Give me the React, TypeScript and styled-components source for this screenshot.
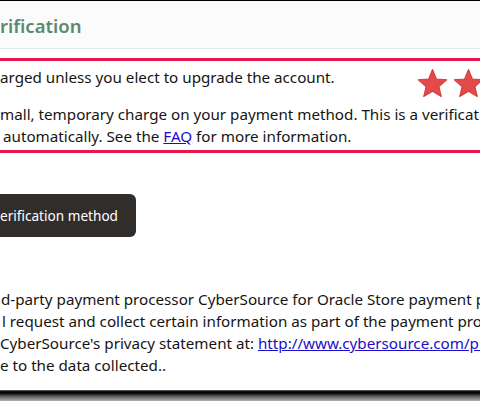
import React from "react";
import styled, { createGlobalStyle } from "styled-components";

const Global = createGlobalStyle`
  html, body { margin: 0; padding: 0; background: #ffffff; }
  body { width: 480px; height: 401px; overflow: hidden; font-family: "Noto Sans", "Open Sans", sans-serif; color: #161513; }
`;

const Frame = styled.div`
  width: 480px;
  height: 401px;
  overflow: hidden;
  display: flex;
  flex-direction: column;
  border-top: 1px solid #000;
  box-sizing: border-box;
`;

const Header = styled.div`
  height: 47px;
  background: #fbfbfb;
  border-bottom: 1px solid #e6e6e6;
  display: flex;
  align-items: center;
  flex-shrink: 0;
`;

const Title = styled.h2`
  margin: 0;
  font-size: 18.5px;
  font-weight: 600;
  color: #5a8a6e;
  white-space: nowrap;
  margin-top: 1px;
`;

const Card = styled.div`
  flex: 1;
  display: flex;
  flex-direction: column;
  background: #fff;
`;

const Notice = styled.div`
  margin-top: 9px;
  border-top: 3px solid #e8164a;
  border-bottom: 3px solid #e8164a;
  padding: 5px 0 3px 0;
  font-size: 15.2px;
  line-height: 22px;
`;

const NoticeRow = styled.div`
  display: flex;
  justify-content: space-between;
  align-items: flex-start;
`;

const Line = styled.div<{ $indent?: number }>`
  white-space: nowrap;
  padding-left: ${(p) => p.$indent ?? 0}px;
`;

const Stars = styled.div`
  display: flex;
  gap: 5px;
  margin-top: 2px;
  margin-right: -4px;
  flex-shrink: 0;
`;

const Para = styled.div`
  margin-top: 5px;
`;

const Link = styled.a`
  color: #1a0dcc;
  text-decoration: underline;
`;

const Button = styled.button`
  align-self: flex-start;
  margin: 41px 0 0 -16px;
  height: 43px;
  padding: 0 18px 0 16px;
  border: none;
  border-radius: 6px;
  background: #312d2a;
  color: #fff;
  font-family: "Noto Sans", "Open Sans", sans-serif;
  font-size: 13.6px;
  white-space: nowrap;
`;

const Body = styled.div`
  margin-top: 51px;
  font-size: 15.2px;
  line-height: 22px;
`;

const Spacer = styled.div`
  flex: 1;
`;

const Shadow = styled.div`
  height: 11px;
  flex-shrink: 0;
  background: linear-gradient(to bottom, #8a8a8a 0px, #111 1px, #000 3px, #555 6px, #b0b0b0 11px);
`;

const Star = () => (
  <svg width="31" height="30" viewBox="0 0 24 23">
    <polygon
      points="12,1 15,8.4 23,9 17,14.3 18.8,22 12,17.9 5.2,22 7,14.3 1,9 9,8.4"
      fill="#e44a4a"
      stroke="#d43c3c"
      strokeWidth="0.8"
      strokeLinejoin="round"
    />
  </svg>
);

export default function App() {
  return (
    <>
      <Global />
      <Frame>
        <Header>
          <Title>rification</Title>
        </Header>
        <Card>
          <Notice>
            <NoticeRow>
              <Line $indent={0}>arged unless you elect to upgrade the account.</Line>
              <Stars>
                <Star />
                <Star />
              </Stars>
            </NoticeRow>
            <Para>
              <Line>mall, temporary charge on your payment method. This is a verification charge</Line>
              <Line $indent={3}>
                automatically. See the <Link href="#">FAQ</Link> for more information.
              </Line>
            </Para>
          </Notice>
          <Button>erification method</Button>
          <Body>
            <Line $indent={1}>d-party payment processor CyberSource for Oracle Store payment processing</Line>
            <Line $indent={2}>l request and collect certain information as part of the payment process</Line>
            <Line>
              CyberSource's privacy statement at: <Link href="#">http://www.cybersource.com/privacy</Link>
            </Line>
            <Line>e to the data collected..</Line>
          </Body>
          <Spacer />
        </Card>
        <Shadow />
      </Frame>
    </>
  );
}
